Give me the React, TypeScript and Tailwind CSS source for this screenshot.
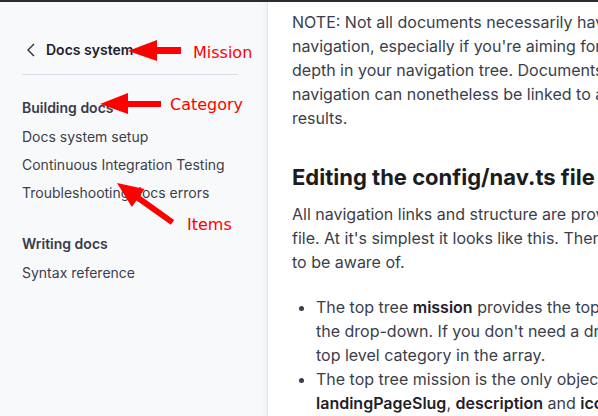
import React from "react";

const sideItem = "text-[14px] leading-[28px] text-[#3c3e4b]";
const line = "whitespace-nowrap";

function Annotations() {
  return (
    <svg className="pointer-events-none absolute inset-0" width="598" height="416" viewBox="0 0 598 416">
      {/* Mission */}
      <polygon points="128,51 157,40 157,47 181,47 181,54 157,54 157,61" fill="#ff0000" />
      {/* Category */}
      <polygon points="100,104 128,93 128,101 161,101 161,107 128,107 128,114" fill="#ff0000" />
      {/* Items */}
      <polygon points="117,183 144.6,189 139.9,195.6 174.2,219.9 170.8,224.7 136.5,200.4 131.8,207" fill="#ff0000" />
      <text x="193" y="58" fill="#ff0000" fontSize="16" fontFamily="'DejaVu Sans', sans-serif">Mission</text>
      <text x="170" y="110" fill="#ff0000" fontSize="16" fontFamily="'DejaVu Sans', sans-serif">Category</text>
      <text x="187" y="230" fill="#ff0000" fontSize="16" fontFamily="'DejaVu Sans', sans-serif">Items</text>
    </svg>
  );
}

export default function App() {
  return (
    <div className="relative h-[416px] w-[598px] overflow-hidden bg-white font-['Inter','Noto_Sans',sans-serif]">
      <div className="h-[2px] bg-[#2b2b33]" />
      <div className="flex h-[414px]">
        {/* Sidebar */}
        <aside className="flex w-[268px] shrink-0 flex-col border-r border-[#e4e5ea] bg-[#f8f9fb] pl-[22px] pr-[29px] pt-[38px] shadow-[inset_-10px_0_10px_-10px_rgba(0,0,0,0.06)]">
          <div className="flex h-5 items-center">
            <svg width="12" height="14" viewBox="0 0 12 14" className="ml-[4px]">
              <polyline points="8,1 2,7 8,13" fill="none" stroke="#2a2c36" strokeWidth="1.4" />
            </svg>
            <span className="ml-[8px] text-[14px] font-semibold leading-5 text-[#1e2029]">Docs system</span>
          </div>
          <div className="mt-[14px] h-px bg-[#d9dcea]" />
          <div className="mt-[23px] text-[14px] font-semibold leading-5 text-[#383a48]">Building docs</div>
          <div className="mt-[5px] flex flex-col">
            <span className={sideItem}>Docs system setup</span>
            <span className={sideItem}>Continuous Integration Testing</span>
            <span className={sideItem}>Troubleshooting docs errors</span>
          </div>
          <div className="mt-[27px] text-[14px] font-semibold leading-5 text-[#383a48]">Writing docs</div>
          <div className="mt-[5px] flex flex-col">
            <span className={sideItem}>Syntax reference</span>
          </div>
        </aside>

        {/* Content */}
        <main className="min-w-0 flex-1 pl-[24px] pt-[8px] text-[16px] leading-[24px] text-[#3a3e4b]">
          <p>
            <span className={line + " block"}>NOTE: Not all documents necessarily have to be included in the</span>
            <span className={line + " block"}>navigation, especially if you're aiming for a flatter structure or limited</span>
            <span className={line + " block"}>depth in your navigation tree. Documents that are not in the</span>
            <span className={line + " block"}>navigation can nonetheless be linked to and will appear in search</span>
            <span className={line + " block"}>results.</span>
          </p>
          <h2 className="mt-[31px] whitespace-nowrap text-[22px] font-bold leading-[32px] text-[#1b1c22]">
            Editing the config/nav.ts file
          </h2>
          <p className="mt-[9px]">
            <span className={line + " block"}>All navigation links and structure are provided in the config/nav.ts</span>
            <span className={line + " block"}>file. At it's simplest it looks like this. There are a few things</span>
            <span className={line + " block"}>to be aware of.</span>
          </p>
          <ul className="mt-[21px] list-disc pl-[24px] marker:text-[#3a3e4b]">
            <li>
              <span className={line + " block"}>
                The top tree <b className="font-semibold text-[#1f2128]">mission</b> provides the top level headings in
              </span>
              <span className={line + " block"}>the drop-down. If you don't need a drop-down, just use one</span>
              <span className={line + " block"}>top level category in the array.</span>
            </li>
            <li>
              <span className={line + " block"}>The top tree mission is the only object that supports the</span>
              <span className={line + " block"}>
                <b className="font-semibold text-[#1f2128]">landingPageSlug</b>,{" "}
                <b className="font-semibold text-[#1f2128]">description</b> and{" "}
                <b className="font-semibold text-[#1f2128]">icon</b> fields.
              </span>
            </li>
          </ul>
        </main>
      </div>
      <Annotations />
    </div>
  );
}
